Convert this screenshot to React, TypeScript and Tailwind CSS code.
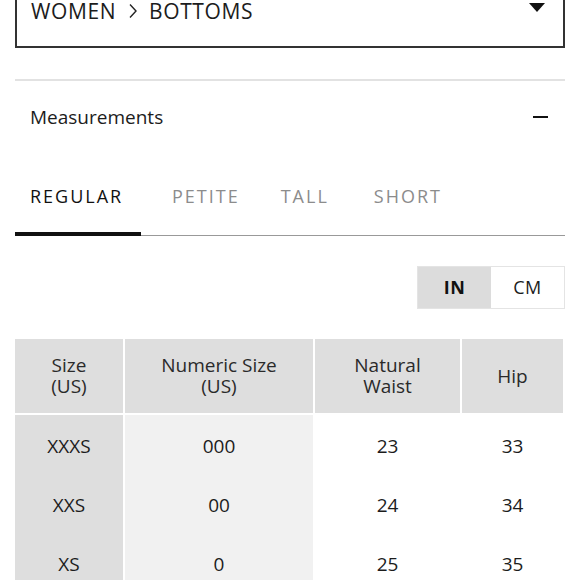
import React from 'react';

const tabs = [
  { label: 'REGULAR', cls: 'w-[126px] pl-[15px]' },
  { label: 'PETITE', cls: 'ml-[31px]' },
  { label: 'TALL', cls: 'ml-[41px]' },
  { label: 'SHORT', cls: 'ml-[45px]' },
];

const rows = [
  { size: 'XXXS', numeric: '000', waist: '23', hip: '33' },
  { size: 'XXS', numeric: '00', waist: '24', hip: '34' },
  { size: 'XS', numeric: '0', waist: '25', hip: '35' },
];

export default function App() {
  const [tab, setTab] = React.useState('REGULAR');
  const [unit, setUnit] = React.useState('IN');

  return (
    <div className="w-[580px] h-[580px] overflow-hidden bg-white text-[#1c1c1c] font-['Open_Sans',sans-serif] font-normal">
      <div className="px-[15px]">
        {/* category select */}
        <div className="-mt-[20px] h-[68px] border-2 border-[#333] flex items-start justify-between pl-[14px] pr-[18px] pt-[17px]">
          <span className="flex items-center text-[21px] leading-[24px] tracking-[0.6px]">
            WOMEN
            <svg width="10" height="16" viewBox="0 0 10 16" className="ml-[12px] mr-[11px]">
              <path d="M2 1.5 L8 8 L2 14.5" fill="none" stroke="#222" strokeWidth="1.4" />
            </svg>
            BOTTOMS
          </span>
          <svg width="16" height="10" viewBox="0 0 16 10" className="mt-[4px]">
            <path d="M0 0 H16 L8 9 Z" fill="#111" />
          </svg>
        </div>

        <div className="mt-[31px] h-[2px] bg-[#e2e2e2]" />

        {/* accordion header */}
        <div className="flex items-center justify-between pl-[15px] pr-[17px] mt-[24px]">
          <span className="text-[19px] leading-[24px]">Measurements</span>
          <span className="block w-[15px] h-[2px] bg-[#111]" />
        </div>

        {/* tabs */}
        <div className="mt-[56px] flex border-b border-[#999]">
          {tabs.map((t) => (
            <button
              key={t.label}
              onClick={() => setTab(t.label)}
              className={`relative text-left pb-[28px] text-[18px] leading-[22px] tracking-[2px] ${t.cls} ${
                tab === t.label ? 'text-[#111]' : 'text-[#8c8c8c]'
              }`}
            >
              {t.label}
              {tab === t.label && (
                <span className="absolute left-0 w-[126px] -bottom-[1px] h-[4px] bg-[#111]" />
              )}
            </button>
          ))}
        </div>

        {/* unit toggle */}
        <div className="mt-[30px] flex justify-end">
          <div className="flex border border-[#e4e4e4] h-[43px]">
            {['IN', 'CM'].map((u) => (
              <button
                key={u}
                onClick={() => setUnit(u)}
                className={`w-[73px] text-[18px] tracking-[0.5px] ${
                  unit === u ? 'bg-[#dcdcdc] font-bold text-[#111]' : 'bg-white'
                }`}
              >
                {u}
              </button>
            ))}
          </div>
        </div>

        {/* size table */}
        <div className="mt-[30px] grid grid-cols-[108px_188px_145px_101px] gap-x-[2px] text-[19px] text-center">
          {['Size\n(US)', 'Numeric Size\n(US)', 'Natural\nWaist', 'Hip'].map((h) => (
            <div
              key={h}
              className="bg-[#dedede] h-[74px] mb-[2px] flex items-center justify-center whitespace-pre-line leading-[21px] text-[#2a2a2a]"
            >
              {h}
            </div>
          ))}
          {rows.map((r) => (
            <React.Fragment key={r.size}>
              <div className="bg-[#dedede] h-[59px] pt-[3px] flex items-center justify-center">{r.size}</div>
              <div className="bg-[#f1f1f1] h-[59px] pt-[3px] flex items-center justify-center">{r.numeric}</div>
              <div className="bg-white h-[59px] pt-[3px] flex items-center justify-center">{r.waist}</div>
              <div className="bg-white h-[59px] pt-[3px] flex items-center justify-center">{r.hip}</div>
            </React.Fragment>
          ))}
        </div>
      </div>
    </div>
  );
}
